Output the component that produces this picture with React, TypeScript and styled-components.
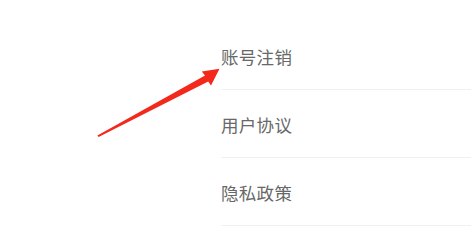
import React from 'react';
import styled, { createGlobalStyle } from 'styled-components';

const GlobalStyle = createGlobalStyle`
  html, body {
    margin: 0;
    padding: 0;
    background: #ffffff;
  }
`;

const Page = styled.div`
  position: relative;
  width: 471px;
  height: 235px;
  display: flex;
  padding-top: 22px;
  box-sizing: border-box;
  overflow: hidden;
`;

const Gutter = styled.div`
  width: 221px;
  flex-shrink: 0;
`;

const List = styled.ul`
  flex: 1;
  margin: 0;
  padding: 0;
  list-style: none;
`;

const Row = styled.li`
  height: 68px;
  display: flex;
  align-items: center;
  border-bottom: 1px solid #f0f0f0;
  font-family: "Noto Sans CJK SC", "Noto Sans", sans-serif;
  font-size: 17.5px;
  color: #686868;
  letter-spacing: 0.3px;
  padding-top: 2px;
  box-sizing: border-box;
`;

const Arrow = styled.svg`
  position: absolute;
  left: 90px;
  top: 60px;
  width: 140px;
  height: 85px;
  pointer-events: none;
`;

const items = ['账号注销', '用户协议', '隐私政策'];

export default function App() {
  return (
    <>
      <GlobalStyle />
      <Page>
        <Gutter />
        <List>
          {items.map((label) => (
            <Row key={label}>{label}</Row>
          ))}
        </List>
        <Arrow viewBox="90 60 140 85">
          <polygon
            points="97.4,135.6 98.6,137 208.2,81.4 211,85.5 219.5,68.8 201.8,71.6 205,75.6"
            fill="#f2291b"
          />
        </Arrow>
      </Page>
    </>
  );
}
